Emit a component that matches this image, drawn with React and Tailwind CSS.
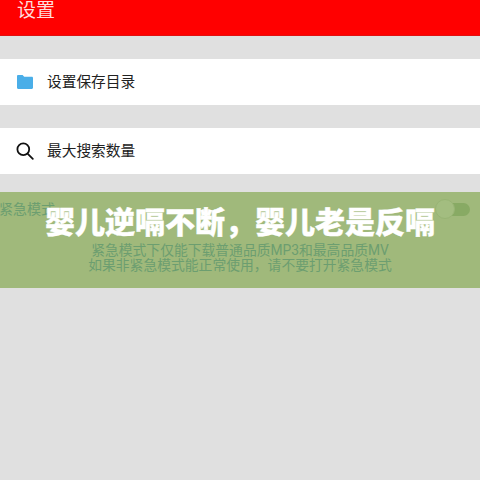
const cjk = { fontFamily: '"Roboto", "Noto Sans CJK SC", sans-serif' };

function FolderIcon() {
    return (
        <svg width="16" height="14" viewBox="0 0 16 14" className="shrink-0">
            <path d="M0 1.2C0 .5.5 0 1.2 0h4.4l1.6 1.8h7.6c.7 0 1.2.5 1.2 1.2v9.8c0 .7-.5 1.2-1.2 1.2H1.2C.5 14 0 13.500 0 12.800Z" fill="#4aaee8" />
        </svg>
    );
}

function SearchIcon() {
    return (
        <svg width="18" height="18" viewBox="0 0 18 18" fill="none" stroke="#111" strokeWidth="1.8" strokeLinecap="round" className="shrink-0">
            <circle cx="7.300" cy="7.300" r="5.900" />
            <path d="M11.800 11.800 16.800 16.800" />
        </svg>
    );
}

function SettingRow({ icon, label }) {
    return (
        <div className="h-[46px] bg-white flex items-center pl-4 gap-[13px] text-[14.7px] text-[#222]">
            <div className="w-[18px] flex justify-center">{icon}</div>
            <span>{label}</span>
        </div>
    );
}

export default function App() {
    return (
        <div className="relative w-[480px] h-[480px] overflow-hidden bg-[#e0e0e0]" style={cjk}>
            {/* Header */}
            <div className="h-[36px] bg-[#ff0000] border-b border-[#e01010] pl-[17px] text-[19px] leading-[21px] text-[#ffdcdc]">
                设置
            </div>

            <div className="mt-[23px] flex flex-col gap-[23px]">
                <SettingRow icon={<FolderIcon />} label="设置保存目录" />
                <SettingRow icon={<SearchIcon />} label="最大搜索数量" />
            </div>

            {/* Banner background */}
            <div className="absolute left-0 right-0 top-[192px] h-[96px] bg-[#a0b97b]">
                <div className="absolute right-[10px] top-[11px] w-[24px] h-[13px] rounded-full bg-[#88aa64]" />
                <div className="absolute right-[25px] top-[7px] w-[20px] h-[20px] rounded-full bg-[#a3bd80] border border-[#98b474]" />
            </div>

            {/* Emergency mode */}
            <div className="relative mt-[25px] h-[16px] text-sm text-[#6c9e70]">
                <span className="-ml-px">紧急模式</span>
            </div>
            <div className="relative mt-[28px] flex flex-col items-center text-[13.8px] leading-[15px] text-[#6c9e70]">
                <span>紧急模式下仅能下载普通品质MP3和最高品质MV</span>
                <span>如果非紧急模式能正常使用，请不要打开紧急模式</span>
            </div>

            {/* Title over the banner */}
            <div className="absolute left-0 right-0 top-[204px] text-center text-[30px] leading-[38px] font-black text-white [-webkit-text-stroke:0.4px_white]">
                婴儿逆嗝不断，婴儿老是反嗝
            </div>
        </div>
    );
}
